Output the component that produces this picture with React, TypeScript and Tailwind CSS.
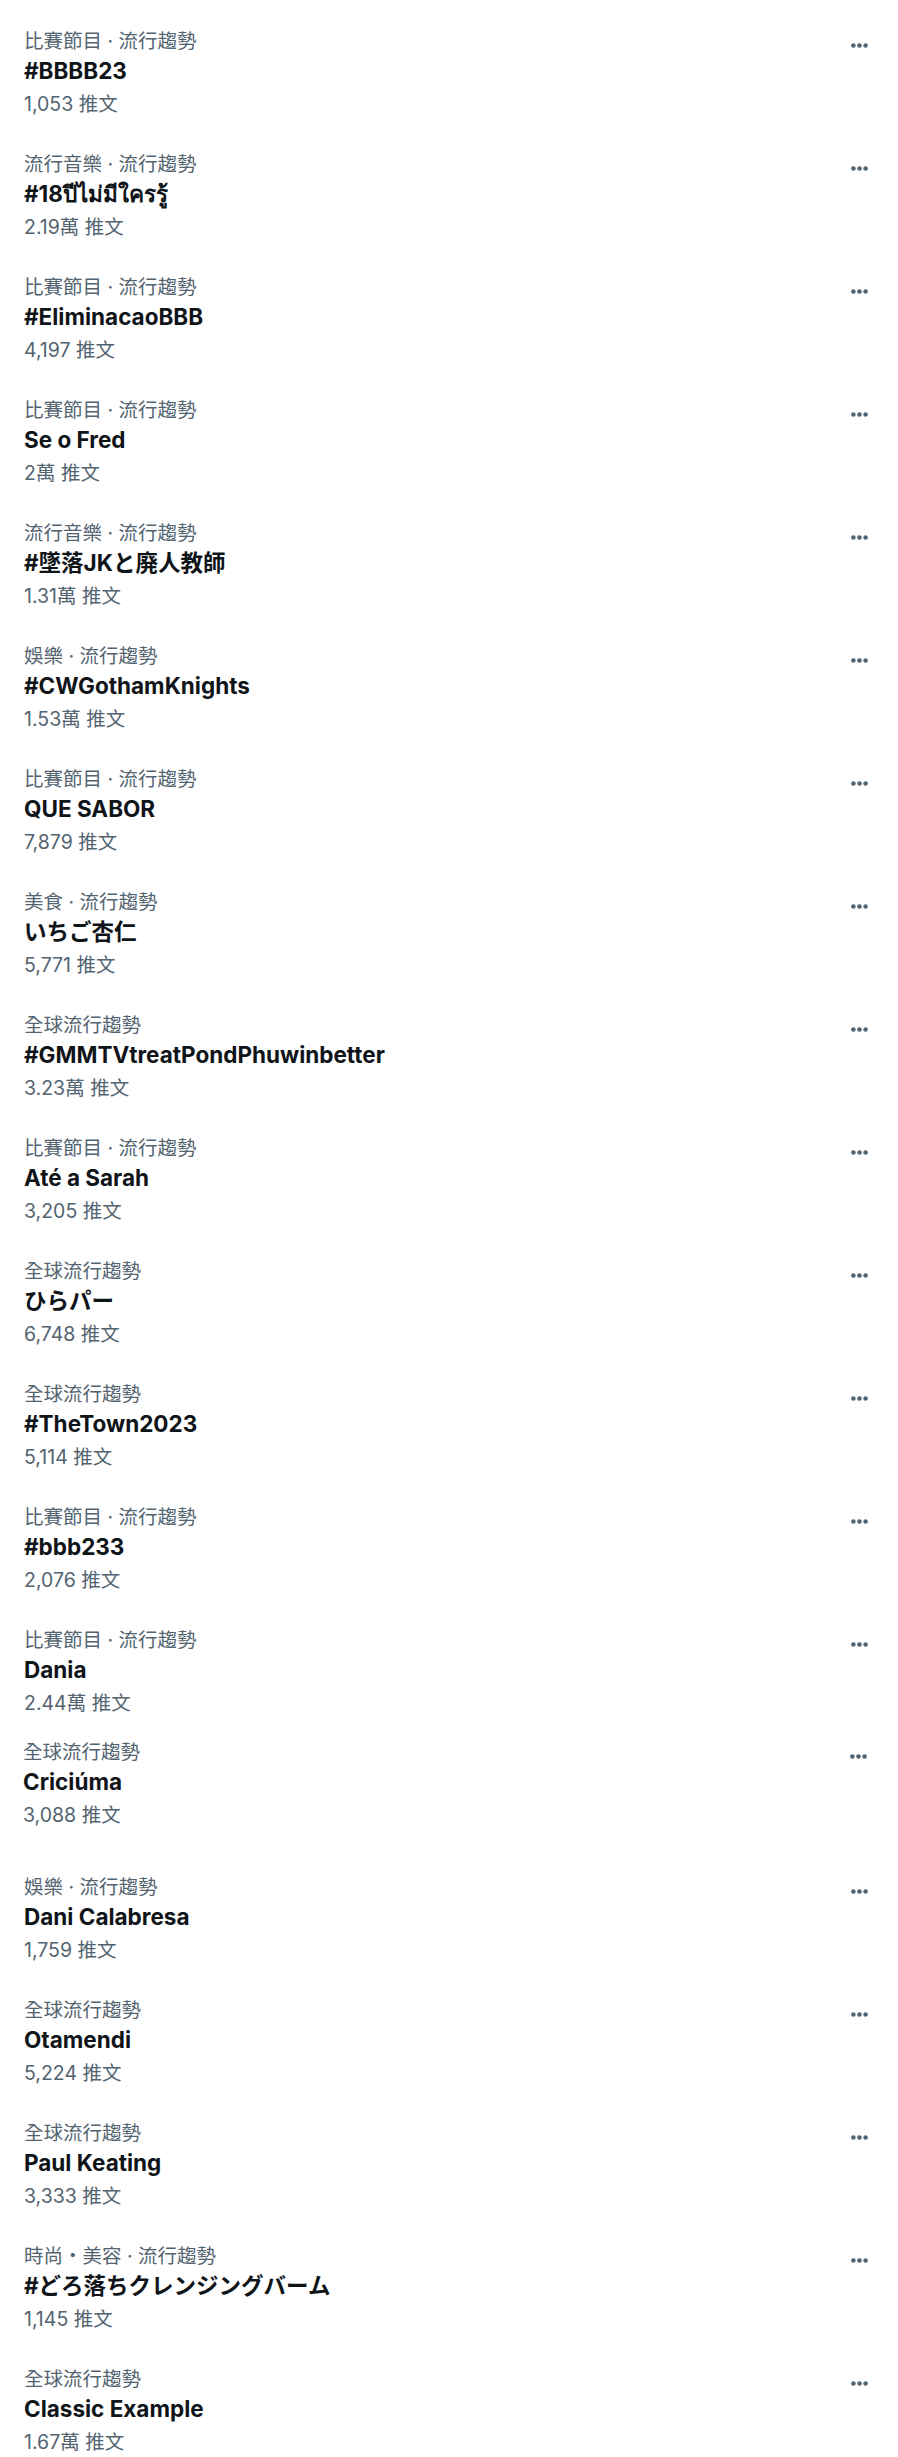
import React from "react";

type Trend = { cat: string; title: string; count: string };

const trends: Trend[] = [
  { cat: "比賽節目 · 流行趨勢", title: "#BBBB23", count: "1,053 推文" },
  { cat: "流行音樂 · 流行趨勢", title: "#18ปีไม่มีใครรู้", count: "2.19萬 推文" },
  { cat: "比賽節目 · 流行趨勢", title: "#EliminacaoBBB", count: "4,197 推文" },
  { cat: "比賽節目 · 流行趨勢", title: "Se o Fred", count: "2萬 推文" },
  { cat: "流行音樂 · 流行趨勢", title: "#墜落JKと廃人教師", count: "1.31萬 推文" },
  { cat: "娛樂 · 流行趨勢", title: "#CWGothamKnights", count: "1.53萬 推文" },
  { cat: "比賽節目 · 流行趨勢", title: "QUE SABOR", count: "7,879 推文" },
  { cat: "美食 · 流行趨勢", title: "いちご杏仁", count: "5,771 推文" },
  { cat: "全球流行趨勢", title: "#GMMTVtreatPondPhuwinbetter", count: "3.23萬 推文" },
  { cat: "比賽節目 · 流行趨勢", title: "Até a Sarah", count: "3,205 推文" },
  { cat: "全球流行趨勢", title: "ひらパー", count: "6,748 推文" },
  { cat: "全球流行趨勢", title: "#TheTown2023", count: "5,114 推文" },
  { cat: "比賽節目 · 流行趨勢", title: "#bbb233", count: "2,076 推文" },
  { cat: "比賽節目 · 流行趨勢", title: "Dania", count: "2.44萬 推文" },
  { cat: "全球流行趨勢", title: "Criciúma", count: "3,088 推文" },
  { cat: "娛樂 · 流行趨勢", title: "Dani Calabresa", count: "1,759 推文" },
  { cat: "全球流行趨勢", title: "Otamendi", count: "5,224 推文" },
  { cat: "全球流行趨勢", title: "Paul Keating", count: "3,333 推文" },
  { cat: "時尚・美容 · 流行趨勢", title: "#どろ落ちクレンジングバーム", count: "1,145 推文" },
  { cat: "全球流行趨勢", title: "Classic Example", count: "1.67萬 推文" },
];

function Dots() {
  return (
    <svg width="17" height="5" viewBox="0 0 17 5" className="block">
      <circle cx="2.4" cy="2.5" r="2.3" fill="#536471" />
      <circle cx="8.5" cy="2.5" r="2.3" fill="#536471" />
      <circle cx="14.6" cy="2.5" r="2.3" fill="#536471" />
    </svg>
  );
}

function Item({ t, idx }: { t: Trend; idx: number }) {
  let pad = "pt-[18px] pb-[18px] pl-[24px] pr-[30px]";
  if (idx === 13) pad = "pt-[18px] pb-[7px] pl-[24px] pr-[30px]";
  if (idx === 14) pad = "pt-[18px] pb-[30px] pl-[23px] pr-[31px]";
  return (
    <div className={`flex justify-between items-start ${pad}`}>
      <div className="flex flex-col min-w-0">
        <div className="text-[19.5px] leading-[24px] text-[#536471]">{t.cat}</div>
        <div className="mt-[3px] text-[22.5px] leading-[30px] font-bold text-[#0f1419]">{t.title}</div>
        <div className="mt-[6px] text-[19.5px] leading-[24px] text-[#536471]">{t.count}</div>
      </div>
      <div className="mt-[14px]">
        <Dots />
      </div>
    </div>
  );
}

export default function App() {
  return (
    <div
      className="h-[2457px] w-[898px] overflow-hidden bg-white pt-[11px]"
      style={{ fontFamily: 'Inter, "Noto Sans CJK TC", "Noto Sans CJK JP", "Noto Sans", sans-serif' }}
    >
      {trends.map((t, i) => (
        <Item key={i} t={t} idx={i} />
      ))}
    </div>
  );
}
